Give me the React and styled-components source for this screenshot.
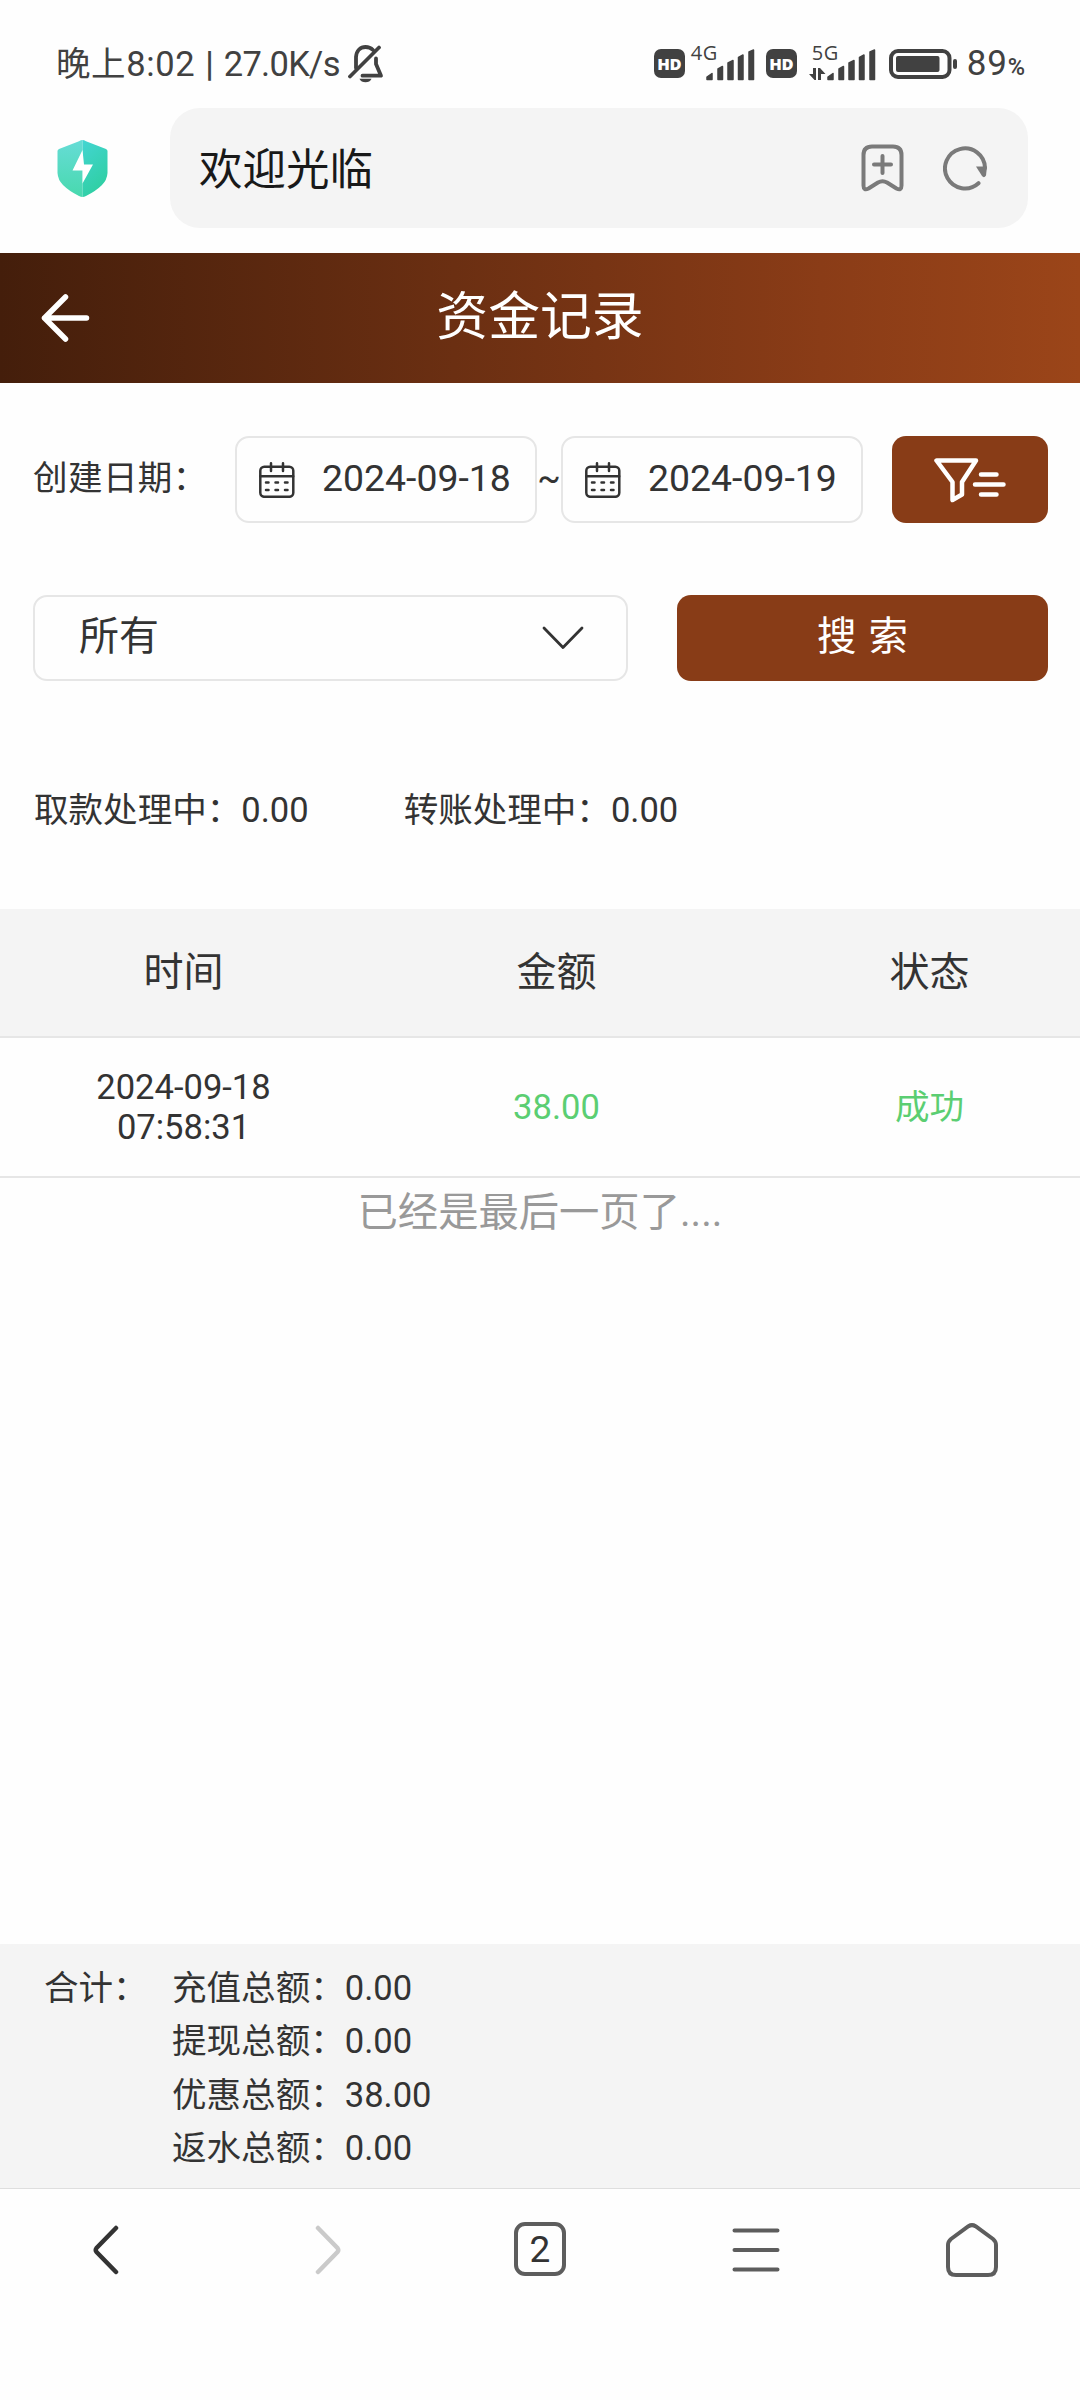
import React from "react";
import styled, { createGlobalStyle } from "styled-components";

const Global = createGlobalStyle`
  * { box-sizing: border-box; }
  body {
    margin: 0;
    background: #fefefe;
    color: #333;
    font-family: Roboto, "Noto Sans CJK SC", sans-serif;
  }
  svg { display: block; flex: none; }
  button { border: 0; padding: 0; font: inherit; color: inherit; background: none; }
`;

const Screen = styled.div`
  width: 1080px;
  height: 2400px;
  display: flex;
  flex-direction: column;
  overflow: hidden;
`;

const StatusBar = styled.div`
  height: 108px;
  padding: 19px 55px 0 56px;
  display: flex;
  justify-content: space-between;
  color: #414141;
`;
const StatusSide = styled.div`
  display: flex;
  align-items: center;
  height: 90px;
`;
const Clock = styled.span`
  font-size: 34.5px;
  line-height: 40px;
  white-space: pre;
  letter-spacing: ${(p) => p.$track || 0}px;
  margin-right: ${(p) => p.$gap || 0}px;
  font-weight: ${(p) => (p.$strong ? 500 : 400)};
`;
const HdBadge = styled.span`
  width: 31px;
  height: 29px;
  border-radius: 7px;
  background: #414141;
  color: #fff;
  font: 800 16.5px/29px "Open Sans", sans-serif;
  letter-spacing: -0.3px;
  text-align: center;
  margin: 0 ${(p) => p.$gap}px 2px 0;
`;
const Network = styled.div`
  display: flex;
  height: 36px;
  margin: 0 ${(p) => p.$gap}px 2px 0;
`;
const NetworkLabel = styled.div`
  width: ${(p) => p.$w}px;
  display: flex;
  flex-direction: column;
  align-items: flex-start;
  font: 20px/15px "Open Sans", sans-serif;
  white-space: nowrap;
  letter-spacing: 0.5px;
  span { margin-left: ${(p) => p.$indent || 0}px; }
  svg { margin-top: 8px; }
`;
const SignalSlot = styled.div`
  align-self: flex-end;
`;
const Percent = styled.div`
  display: flex;
  align-items: baseline;
  margin: 3px 0 0 8px;
  font-size: 35px;
  line-height: 40px;
  letter-spacing: 0.8px;
  small { font-size: 23.5px; font-weight: 500; margin-left: 0; letter-spacing: 0; }
`;

const AddressRow = styled.div`
  height: 145px;
  padding: 0 52px 0 57px;
  display: flex;
  align-items: flex-start;
  gap: 62px;
  > svg { margin-top: 32px; }
`;
const AddressBox = styled.div`
  flex: 1;
  height: 120px;
  border-radius: 30px;
  background: #f4f4f4;
  padding: 0 40px 0 29px;
  display: flex;
  align-items: center;
`;
const AddressText = styled.span`
  flex: 1;
  padding-top: 6px;
  font-size: 43.5px;
  line-height: 60px;
  color: #191919;
`;
const AddressIcons = styled.div`
  display: flex;
  align-items: center;
  gap: 39px;
`;

const PageHeader = styled.header`
  height: 130px;
  background: linear-gradient(90deg, #441e0b 0%, #6b2f12 42%, #8a3c17 76%, #9b4519 100%);
  color: #fff;
  display: grid;
  grid-template-columns: 120px 1fr 120px;
  align-items: center;
  > svg { margin-left: 40px; }
  h1 {
    margin: 0;
    text-align: center;
    font-size: 51.84px;
    font-weight: 400;
    line-height: 70px;
  }
`;

const Filters = styled.section`
  padding: 53px 32px 0 33px;
`;
const DateRow = styled.div`
  display: flex;
  align-items: center;
  height: 87px;
`;
const DateLabel = styled.span`
  width: 202px;
  font-size: 34.56px;
  line-height: 50px;
  letter-spacing: 0.4px;
  white-space: nowrap;
  padding-bottom: 4px;
`;
const DateField = styled.div`
  width: 302px;
  height: 87px;
  border: 2px solid #e6e6e6;
  border-radius: 14px;
  padding-left: 23px;
  display: flex;
  align-items: center;
  font-size: 37.4px;
  gap: 27px;
  > svg { margin-left: -1px; }
  > span { padding-bottom: 3px; }
`;
const Tilde = styled.span`
  width: 24px;
  text-align: center;
  font-size: 34.56px;
  padding-bottom: 4px;
`;
const FilterButton = styled.button`
  width: 156px;
  height: 87px;
  margin-left: auto;
  border-radius: 14px;
  background: #883c17;
  display: flex;
  align-items: center;
  padding-left: 41px;
`;
const SearchRow = styled.div`
  margin-top: 72px;
  display: flex;
  gap: 49px;
  height: 86px;
`;
const Select = styled.div`
  width: 595px;
  border: 2px solid #e6e6e6;
  border-radius: 14px;
  padding: 0 42px 0 44px;
  display: flex;
  align-items: center;
  justify-content: space-between;
  font-size: 40px;
  line-height: 60px;
  > span { padding-bottom: 3px; }
`;
const SearchButton = styled.button`
  flex: 1;
  border-radius: 14px;
  background: #883c17;
  color: #fff;
  font-size: 39.5px;
  line-height: 60px;
  padding: 0 0 2px;
  word-spacing: 2px;
`;

const Pending = styled.div`
  height: 228px;
  padding: 104px 34px 0;
  display: flex;
  gap: 95px;
  font-size: 34.56px;
  line-height: 50px;
`;

const TableRow = styled.div`
  display: grid;
  grid-template-columns: 367px 379px 334px;
  align-items: center;
  text-align: center;
  height: ${(p) => (p.$head ? 129 : 140)}px;
  background: ${(p) => (p.$head ? "#f4f4f4" : "transparent")};
  border-bottom: 2px solid #e6e6e6;
  font-size: ${(p) => (p.$head ? 40 : 34.56)}px;
  line-height: 40px;
  > :last-child { padding-left: 33px; }
`;
const Cell = styled.div`
  color: ${(p) => (p.$green ? "#5bce72" : "#333")};
`;
const EndNote = styled.div`
  flex: 1;
  padding-top: 5px;
  text-align: center;
  color: #999;
  font-size: 40.3px;
  line-height: 60px;
`;

const Totals = styled.section`
  height: 244px;
  background: #f4f4f4;
  padding: 18px 44px 0;
  display: grid;
  grid-template-columns: 128px 1fr;
  font-size: 34.56px;
  line-height: 53.4px;
`;
const NavBar = styled.nav`
  height: 212px;
  border-top: 1px solid #dedede;
  display: grid;
  grid-template-columns: repeat(5, 1fr);
  justify-items: center;
  align-items: start;
`;
const NavItem = styled.div`
  height: 122px;
  display: flex;
  align-items: center;
  padding-left: ${(p) => p.$left || 0}px;
  padding-right: ${(p) => p.$right || 0}px;
`;
const TabCount = styled.span`
  width: 52px;
  height: 54px;
  margin-bottom: 2px;
  border: 4px solid #5d5d5d;
  border-radius: 11px;
  color: #333;
  font: 37px/47px Roboto, sans-serif;
  text-align: center;
`;

const BellOff = () => (
  <svg width="36" height="40" viewBox="0 0 36 40" fill="none" stroke="#414141" strokeWidth="3.800" strokeLinecap="round" strokeLinejoin="round">
    <path d="M8 24V13C8.500 6.500 12.500 3 17.500 3C20.500 3 23 4 25 6M28 14.500V20L33 31.700H14.500" />
    <path d="M2 32.500L31 3.500" />
    <path d="M11.500 34.700H23.500C22 39.500 13 39.500 11.500 34.700Z" fill="#414141" stroke="none" />
  </svg>
);

const Bars = () => (
  <svg width="49" height="32" viewBox="0 0 49 32" fill="#414141" stroke="#414141" strokeWidth="1.500" strokeLinejoin="round">
    <path d="M1 30.500V28L6 24.500V30.500Z" />
    <path d="M12 30.500V20L16.500 17.500V30.500Z" />
    <path d="M22 30.500V14L27 11.500V30.500Z" />
    <path d="M32.500 30.500V8.500L37 6V30.500Z" />
    <path d="M43 30.500V3L47.500 1V30.500Z" />
  </svg>
);

const DataArrows = () => (
  <svg width="17" height="12" viewBox="0 0 17 12" fill="#414141">
    <path d="M4 0H7V12H5.500L0 6H4ZM9 0H11L16.500 6H12V12H9Z" />
  </svg>
);

const Battery = () => (
  <svg width="70" height="30" viewBox="0 0 70 30">
    <rect x="2" y="2" width="58.500" height="26" rx="7" fill="none" stroke="#414141" strokeWidth="4" />
    <rect x="7" y="7" width="43.500" height="16" rx="2" fill="#414141" />
    <rect x="64" y="10" width="4" height="10" rx="2" fill="#414141" />
  </svg>
);

const Shield = () => (
  <svg width="51" height="57" viewBox="0 0 51 57">
    <defs>
      <linearGradient id="shieldL" x1="0" y1="0" x2="0" y2="1">
        <stop offset="0" stopColor="#66dcd6" />
        <stop offset="1" stopColor="#48d9ae" />
      </linearGradient>
      <linearGradient id="shieldR" x1="0" y1="0" x2="0.4" y2="1">
        <stop offset="0" stopColor="#43d5d2" />
        <stop offset="1" stopColor="#2fcfa3" />
      </linearGradient>
    </defs>
    <path d="M25.500 0Q24 0 22 1.200L2 9Q0.500 9.800 0.500 11V33Q1 40 6 45Q12 51 22 56Q24 57 25.500 57Z" fill="url(#shieldL)" />
    <path d="M25.500 0Q27 0 29 1.200L49 9Q50.500 9.800 50.500 11V33Q50 40 45 45Q39 51 29 56Q27 57 25.500 57Z" fill="url(#shieldR)" />
    <path d="M25.500 10L15.500 30.500H25.500V43.500L36 24.500H27Z" fill="#fff" />
  </svg>
);

const BookmarkPlus = () => (
  <svg width="43" height="48" viewBox="0 0 43 48" fill="none" stroke="#7a7a7a" strokeWidth="4" strokeLinejoin="round" strokeLinecap="round">
    <path d="M11 2.500H32Q40.500 2.500 40.500 11V41.500Q40.500 47 35.500 44.500L26 38.500Q21.500 36 17 38.500L7.500 44.500Q2.500 47 2.500 41.500V11Q2.500 2.500 11 2.500Z" />
    <path d="M21.500 12V29M13 20.500H30" />
  </svg>
);

const Reload = () => (
  <svg width="45" height="46" viewBox="0 0 45 46">
    <path d="M35.500 38.200A20 20 0 1 1 42 23" fill="none" stroke="#7a7a7a" strokeWidth="4" strokeLinecap="round" />
    <path d="M33 21.500H44L43 30.500Q41 33.500 39 31Z" fill="#7a7a7a" />
  </svg>
);

const BackArrow = () => (
  <svg width="50" height="50" viewBox="0 0 50 50" fill="none" stroke="#fff" strokeWidth="5.500" strokeLinecap="round" strokeLinejoin="round">
    <path d="M25.500 4L4.500 25L25.500 46M4.500 25H46.500" />
  </svg>
);

const CalendarIcon = () => (
  <svg width="36" height="36" viewBox="0 0 36 36" fill="none" stroke="#333" strokeWidth="2.500" strokeLinecap="round">
    <rect x="1.300" y="4.800" width="33" height="30" rx="4" />
    <path d="M1.300 14.200H34.200M12 1.300V9M24 1.300V9" />
    <path d="M7 20.500H9.500M16.500 20.500H19M26 20.500H28.500M7 28H9.500M16.500 28H19M26 28H28.500" />
  </svg>
);

const FunnelLines = () => (
  <svg width="74" height="46" viewBox="0 0 74 46" fill="none" stroke="#fff" strokeWidth="4.500" strokeLinecap="round" strokeLinejoin="round">
    <path d="M3.500 3.500H43L29 25V37.500L19.500 43V25Z" />
    <path d="M48 17.500H63.500M42 27.500H70.500M48 37.500H63.500" />
  </svg>
);

const ChevronDown = () => (
  <svg width="42" height="24" viewBox="0 0 42 24" fill="none" stroke="#333" strokeWidth="2.800" strokeLinecap="round" strokeLinejoin="round">
    <path d="M2 2L21 21.500L40 2" />
  </svg>
);

const NavChevron = ({ forward }) => (
  <svg width="26" height="50" viewBox="0 0 26 50" fill="none" stroke={forward ? "#cacaca" : "#333"} strokeWidth="4.500" strokeLinecap="round" strokeLinejoin="round">
    <path d={forward ? "M3 3L22.500 23Q24 25 22.500 27L3 47" : "M23 3L3.500 23Q2 25 3.500 27L23 47"} />
  </svg>
);

const MenuIcon = () => (
  <svg width="48" height="44" viewBox="0 0 48 44" stroke="#5d5d5d" strokeWidth="4" strokeLinecap="round">
    <path d="M2.500 2.500H45.500M2.500 22H45.500M2.500 41.500H45.500" />
  </svg>
);

const HomeIcon = () => (
  <svg width="52" height="54" viewBox="0 0 52 54" fill="none" stroke="#5d5d5d" strokeWidth="4" strokeLinejoin="round">
    <path d="M22.500 3.200Q26 1 29.500 3.200L47 16Q50 18.500 50 22V44Q50 52 42 52H10Q2 52 2 44V22Q2 18.500 5 16Z" />
  </svg>
);

const totals = [
  ["充值总额", "0.00"],
  ["提现总额", "0.00"],
  ["优惠总额", "38.00"],
  ["返水总额", "0.00"],
];

export default function App() {
  return (
    <Screen>
      <Global />
      <StatusBar>
        <StatusSide>
          <Clock $gap={10} $track={0.6}>晚上8:02</Clock>
          <Clock $gap={10} $strong>|</Clock>
          <Clock $gap={8} $track={-0.7}>27.0K/s</Clock>
          <BellOff />
        </StatusSide>
        <StatusSide>
          <HdBadge $gap={6}>HD</HdBadge>
          <Network $gap={11}>
            <NetworkLabel $w={15}><span>4G</span></NetworkLabel>
            <SignalSlot><Bars /></SignalSlot>
          </Network>
          <HdBadge $gap={12}>HD</HdBadge>
          <Network $gap={13}>
            <NetworkLabel $w={18} $indent={3}><span>5G</span><DataArrows /></NetworkLabel>
            <SignalSlot><Bars /></SignalSlot>
          </Network>
          <Battery />
          <Percent>89<small>%</small></Percent>
        </StatusSide>
      </StatusBar>

      <AddressRow>
        <Shield />
        <AddressBox>
          <AddressText>欢迎光临</AddressText>
          <AddressIcons>
            <BookmarkPlus />
            <Reload />
          </AddressIcons>
        </AddressBox>
      </AddressRow>

      <PageHeader>
        <BackArrow />
        <h1>资金记录</h1>
      </PageHeader>

      <Filters>
        <DateRow>
          <DateLabel>创建日期：</DateLabel>
          <DateField><CalendarIcon /><span>2024-09-18</span></DateField>
          <Tilde>~</Tilde>
          <DateField><CalendarIcon /><span>2024-09-19</span></DateField>
          <FilterButton><FunnelLines /></FilterButton>
        </DateRow>
        <SearchRow>
          <Select><span>所有</span><ChevronDown /></Select>
          <SearchButton>搜 索</SearchButton>
        </SearchRow>
      </Filters>

      <Pending>
        <span>取款处理中：0.00</span>
        <span>转账处理中：0.00</span>
      </Pending>

      <TableRow $head>
        <Cell>时间</Cell>
        <Cell>金额</Cell>
        <Cell>状态</Cell>
      </TableRow>
      <TableRow>
        <Cell>2024-09-18<br />07:58:31</Cell>
        <Cell $green>38.00</Cell>
        <Cell $green>成功</Cell>
      </TableRow>
      <EndNote>已经是最后一页了....</EndNote>

      <Totals>
        <span>合计：</span>
        <div>
          {totals.map(([name, value]) => (
            <div key={name}>{name}：{value}</div>
          ))}
        </div>
      </Totals>
      <NavBar>
        <NavItem $right={4}><NavChevron /></NavItem>
        <NavItem $left={7}><NavChevron forward /></NavItem>
        <NavItem><TabCount>2</TabCount></NavItem>
        <NavItem><MenuIcon /></NavItem>
        <NavItem><HomeIcon /></NavItem>
      </NavBar>
    </Screen>
  );
}
